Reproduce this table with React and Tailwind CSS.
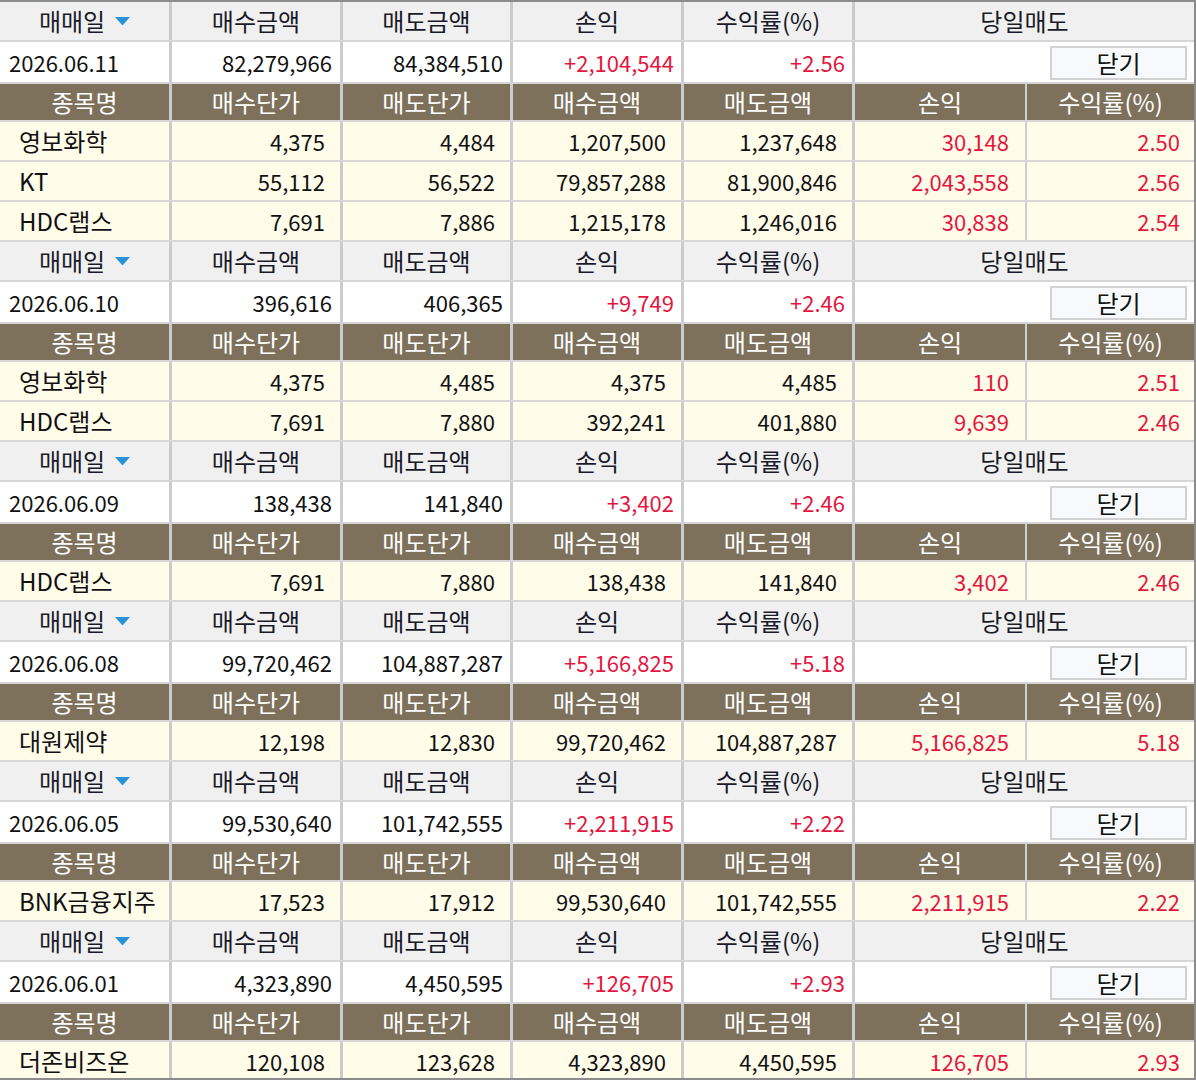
import React from "react";

const days = [
  {
    date: "2026.06.11",
    buy: "82,279,966",
    sell: "84,384,510",
    pnl: "+2,104,544",
    rate: "+2.56",
    items: [
      ["영보화학", "4,375", "4,484", "1,207,500", "1,237,648", "30,148", "2.50"],
      ["KT", "55,112", "56,522", "79,857,288", "81,900,846", "2,043,558", "2.56"],
      ["HDC랩스", "7,691", "7,886", "1,215,178", "1,246,016", "30,838", "2.54"],
    ],
  },
  {
    date: "2026.06.10",
    buy: "396,616",
    sell: "406,365",
    pnl: "+9,749",
    rate: "+2.46",
    items: [
      ["영보화학", "4,375", "4,485", "4,375", "4,485", "110", "2.51"],
      ["HDC랩스", "7,691", "7,880", "392,241", "401,880", "9,639", "2.46"],
    ],
  },
  {
    date: "2026.06.09",
    buy: "138,438",
    sell: "141,840",
    pnl: "+3,402",
    rate: "+2.46",
    items: [["HDC랩스", "7,691", "7,880", "138,438", "141,840", "3,402", "2.46"]],
  },
  {
    date: "2026.06.08",
    buy: "99,720,462",
    sell: "104,887,287",
    pnl: "+5,166,825",
    rate: "+5.18",
    items: [["대원제약", "12,198", "12,830", "99,720,462", "104,887,287", "5,166,825", "5.18"]],
  },
  {
    date: "2026.06.05",
    buy: "99,530,640",
    sell: "101,742,555",
    pnl: "+2,211,915",
    rate: "+2.22",
    items: [["BNK금융지주", "17,523", "17,912", "99,530,640", "101,742,555", "2,211,915", "2.22"]],
  },
  {
    date: "2026.06.01",
    buy: "4,323,890",
    sell: "4,450,595",
    pnl: "+126,705",
    rate: "+2.93",
    items: [["더존비즈온", "120,108", "123,628", "4,323,890", "4,450,595", "126,705", "2.93"]],
  },
];

// widths of the first five columns, right border included
const colW = ["w-[172px]", "w-[171px]", "w-[170px]", "w-[171px]", "w-[171px]"];
const sep = "border-r-[3px] border-[#cbcbcb]";

function DayHeader() {
  const labels = ["매수금액", "매도금액", "손익", "수익률(%)"];
  return (
    <div className="flex h-[40px] bg-[#f0f0f0] text-[#1a1a28] text-[24px] border-b-2 border-[#d6d6d6]">
      <div className={`${colW[0]} ${sep} flex items-center justify-center gap-[10px]`}>
        <span>매매일</span>
        <svg width="15" height="9" viewBox="0 0 15 9" className="mt-[1px]">
          <path d="M0 0h15L7.5 8.5z" fill="#2a93d5" />
        </svg>
      </div>
      {labels.map((l, i) => (
        <div key={l} className={`${colW[i + 1]} ${sep} flex items-center justify-center`}>
          {l}
        </div>
      ))}
      <div className="flex-1 flex items-center justify-center">당일매도</div>
    </div>
  );
}

function DayRow({ d }) {
  return (
    <div className="flex h-[42px] bg-white text-[#111] border-b-2 border-[#d6d6d6]">
      <div className={`${colW[0]} ${sep} flex items-center pl-[9px]`}>{d.date}</div>
      <div className={`${colW[1]} ${sep} flex items-center justify-end pr-[8px]`}>{d.buy}</div>
      <div className={`${colW[2]} ${sep} flex items-center justify-end pr-[7px]`}>{d.sell}</div>
      <div className={`${colW[3]} ${sep} flex items-center justify-end pr-[7px] text-[#e4163f]`}>{d.pnl}</div>
      <div className={`${colW[4]} ${sep} flex items-center justify-end pr-[7px] text-[#e4163f]`}>{d.rate}</div>
      <div className="flex-1 flex items-center justify-end pr-[7px]">
        <button className="w-[137px] h-[34px] mt-[1px] bg-[#f8f9fc] border-2 border-[#d2d2d2] text-[#111] text-[24px] flex items-center justify-center">
          닫기
        </button>
      </div>
    </div>
  );
}

function ItemHeader() {
  const labels = ["종목명", "매수단가", "매도단가", "매수금액", "매도금액"];
  return (
    <div className="flex h-[38px] bg-[#7e715c] text-white text-[24px] border-b-2 border-[#d6d6d6]">
      {labels.map((l, i) => (
        <div key={l} className={`${colW[i]} ${sep} flex items-center justify-center`}>
          {l}
        </div>
      ))}
      <div className="w-[172px] border-r-2 border-[#cfcfcf] flex items-center justify-center">손익</div>
      <div className="flex-1 flex items-center justify-center">수익률(%)</div>
    </div>
  );
}

function ItemRow({ r }) {
  return (
    <div className="flex h-[40px] bg-[#fffcea] text-[#111] border-b-2 border-[#d6d6d6]">
      <div className={`${colW[0]} ${sep} flex items-center pl-[19px] text-[24px]`}>{r[0]}</div>
      {r.slice(1, 5).map((v, i) => (
        <div key={i} className={`${colW[i + 1]} ${sep} flex items-center justify-end pr-[15px]`}>
          {v}
        </div>
      ))}
      <div className="w-[172px] border-r-2 border-[#cfcfcf] flex items-center justify-end pr-[16px] text-[#e4163f]">
        {r[5]}
      </div>
      <div className="flex-1 flex items-center justify-end pr-[14px] text-[#e4163f]">{r[6]}</div>
    </div>
  );
}

export default function App() {
  return (
    <div
      className="w-[1196px] h-[1080px] overflow-hidden bg-white border-t-2 border-r-2 border-b-2 border-[#8c8c8c] text-[22px] leading-none"
      style={{ fontFamily: '"Noto Sans CJK KR", "Noto Sans", sans-serif' }}
    >
      {days.map((d) => (
        <div key={d.date}>
          <DayHeader />
          <DayRow d={d} />
          <ItemHeader />
          {d.items.map((r) => (
            <ItemRow key={r[0]} r={r} />
          ))}
        </div>
      ))}
    </div>
  );
}
